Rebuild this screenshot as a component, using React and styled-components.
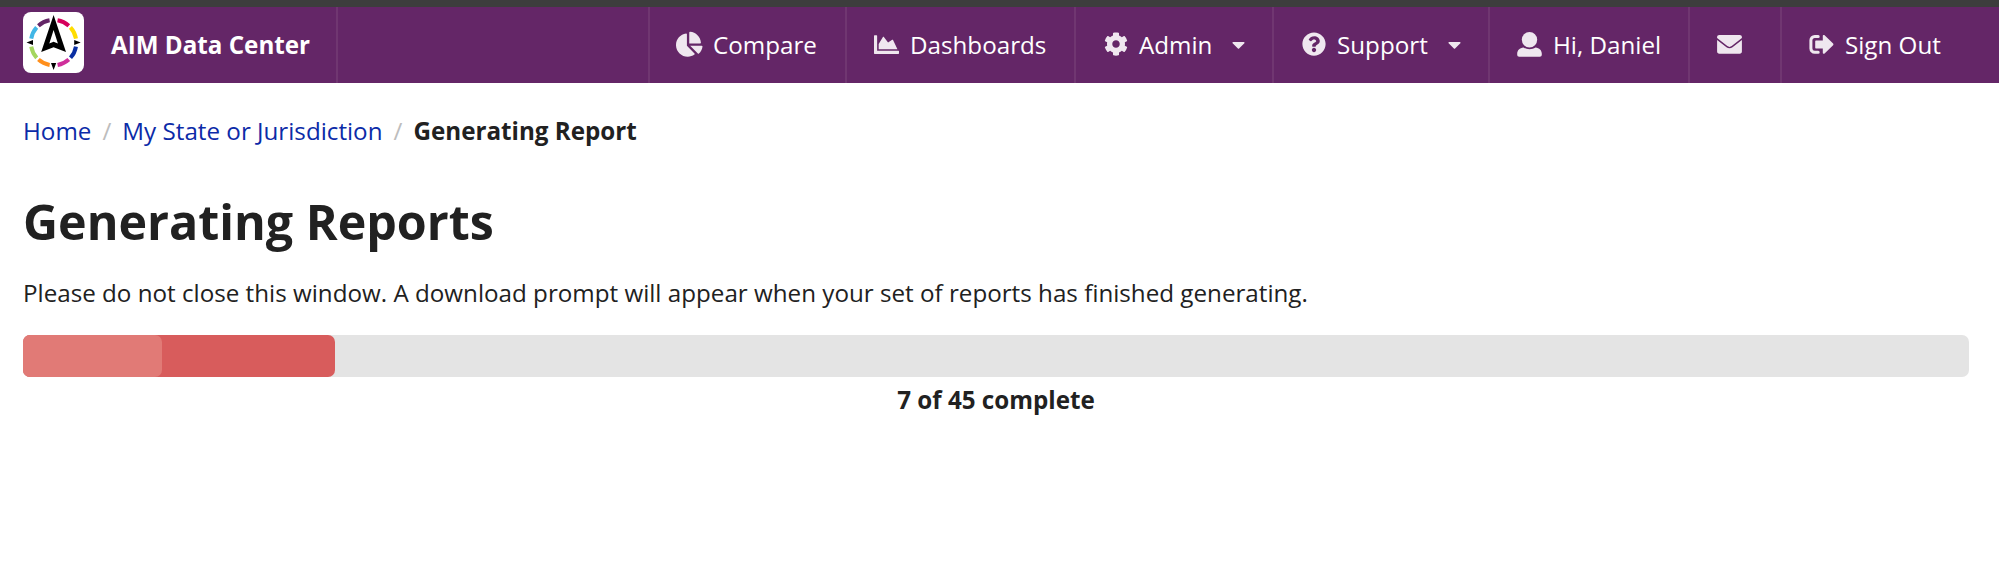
import React from "react";
import styled, { createGlobalStyle, ThemeProvider } from "styled-components";
import {
  FaChartPie,
  FaChartArea,
  FaCog,
  FaQuestionCircle,
  FaCaretDown,
} from "react-icons/fa";

const theme = {
  colors: {
    strip: "#3d3d3d",
    nav: "#642667",
    navDivider: "#703671",
    navIcon: "#efe7ef",
    link: "#0c2ba8",
    text: "#212121",
    slash: "#bdbdbd",
    track: "#e4e4e4",
    bar: "#d85c5c",
    pulse: "#e17a76",
  },
  font: '"Open Sans", "Noto Sans", sans-serif',
};

const GlobalStyle = createGlobalStyle`
  * { box-sizing: border-box; }
  body {
    margin: 0;
    background: #fff;
    color: ${({ theme }) => theme.colors.text};
    font-family: ${({ theme }) => theme.font};
    font-size: 24.2px;
    line-height: 34px;
  }
`;

// ── Navigation ───────────────────────────────────────────────────────────────

const NavBar = styled.nav`
  display: flex;
  height: 83px;
  border-top: 7px solid ${({ theme }) => theme.colors.strip};
  background: ${({ theme }) => theme.colors.nav};
  color: #fff;
`;

const Brand = styled.a`
  display: flex;
  align-items: center;
  gap: 27px;
  width: 338px;
  padding: 0 0 5px 23px;
  border-right: 2px solid ${({ theme }) => theme.colors.navDivider};
  font-weight: 700;
  white-space: nowrap;

  span { padding-top: 4px; }
`;

const NavMenu = styled.div`
  display: flex;
  margin-left: auto;
`;

const NavItem = styled.a`
  display: flex;
  align-items: center;
  width: ${({ $width }) => $width}px;
  padding: 0 0 1px 26px;
  border-left: 2px solid ${({ theme }) => theme.colors.navDivider};
  white-space: nowrap;

  svg { flex: none; color: ${({ theme }) => theme.colors.navIcon}; }
`;

const IconSlot = styled.span`
  display: flex;
  justify-content: center;
  width: 27px;
  margin: 0 ${({ $gap }) => $gap}px 1px 0;
`;

const Caret = styled(FaCaretDown)`
  margin-left: 16px;
`;

// ── Page ─────────────────────────────────────────────────────────────────────

const Page = styled.main`
  padding: 31px 30px 0 23px;
`;

const Breadcrumb = styled.div`
  display: flex;
  align-items: center;
  height: 34px;
  white-space: nowrap;

  a { color: ${({ theme }) => theme.colors.link}; }
  i {
    width: 31px;
    color: ${({ theme }) => theme.colors.slash};
    font-style: normal;
    text-align: center;
  }
`;

const Title = styled.h1`
  margin: 42px 0 0;
  font-size: 48.4px;
  line-height: 62px;
  font-weight: 700;
`;

const Message = styled.p`
  margin: 24px 0 0;
`;

const Progress = styled.div`
  height: 42px;
  margin-top: 25px;
  border-radius: 7px;
  background: ${({ theme }) => theme.colors.track};
`;

const Bar = styled.div`
  width: 312px;
  height: 100%;
  border-radius: 7px;
  background: ${({ theme }) => theme.colors.bar};
`;

const Pulse = styled.div`
  width: 139px;
  height: 100%;
  border-radius: 7px;
  background: ${({ theme }) => theme.colors.pulse};
`;

const ProgressLabel = styled.div`
  margin-top: 6px;
  font-weight: 700;
  text-align: center;
`;

// ── Icons ────────────────────────────────────────────────────────────────────

const UserIcon = ({ size }) => (
  <svg width={size} height={size} viewBox="0 0 25 25" fill="currentColor">
    <circle cx="12.5" cy="7.7" r="7.7" />
    <path d="M6.5 15.5C8.3 16.6 10.3 17.2 12.5 17.2s4.2-.6 6-1.7c3.8.3 6.3 2.9 6.3 6.2v1.1c0 1.2-.8 2-2 2H2.2c-1.2 0-2-.8-2-2v-1.1c0-3.3 2.5-5.9 6.3-6.2z" />
  </svg>
);

const MailIcon = ({ size }) => (
  <svg width={size} height={size} viewBox="0 0 25 25" fill="currentColor">
    <path d="M2.3 3h20.4c1.3 0 2.2.9 2.2 2v1.1l-10.2 8c-1.4 1.1-3 1.1-4.4 0L.1 6.1V5c0-1.1.9-2 2.2-2z" />
    <path d="M.1 8l9.4 7.3c1.9 1.4 4.1 1.4 6 0L24.9 8v11.6c0 1.3-.9 2.1-2.2 2.1H2.3C1 21.7.1 20.9.1 19.6z" />
  </svg>
);

const SignOutIcon = ({ size }) => (
  <svg width={size} height={size} viewBox="0 0 25 25">
    <path
      d="M9.2 4.5H5.7a3.8 3.8 0 0 0-3.8 3.8v8.2a3.8 3.8 0 0 0 3.8 3.8h3.5"
      fill="none"
      stroke="currentColor"
      strokeWidth="3"
      strokeLinecap="round"
    />
    <path
      d="M7.2 8.4h6.6V4c0-1 1.1-1.4 1.8-.7l8.5 8.3c.5.5.5 1.1 0 1.6l-8.5 8.3c-.7.7-1.8.3-1.8-.7v-4.4H7.2c-.6 0-1-.4-1-1v-6c0-.6.4-1 1-1z"
      fill="currentColor"
    />
  </svg>
);

const RING = [
  ["#d6005a", 10],
  ["#ffdd00", 48],
  ["#0a2fa3", 100],
  ["#cf2f9b", 138],
  ["#ff8f1c", 190],
  ["#a4d65e", 228],
  ["#41b6e6", 280],
  ["#642667", 318],
];

// Compass badge: eight arcs with a north arrow
const Logo = () => (
  <svg width="61" height="61" viewBox="0 0 61 61">
    <rect width="61" height="61" rx="8" fill="#fff" />
    {RING.map(([color, angle]) => (
      <path
        key={color}
        d="M30.6 7.9A22.7 22.7 0 0 1 42.6 11.3"
        fill="none"
        stroke={color}
        strokeWidth="4"
        transform={`rotate(${angle} 30.6 30.6)`}
      />
    ))}
    <path d="M3.5 30.6l6.5-2.5v5zM57.7 30.6l-6.5-2.5v5zM30.6 58l-2.6-7h5.2z" />
    <path
      fillRule="evenodd"
      d="M30.6 3L43 40 30.6 35.3 18.2 40zM30.6 18l-4.3 13.6 4.3-1.8 4.3 1.8z"
    />
  </svg>
);

const NAV_ITEMS = [
  { icon: FaChartPie, label: "Compare", width: 197, size: 26.5, gap: 10 },
  { icon: FaChartArea, label: "Dashboards", width: 229, size: 25, gap: 10 },
  { icon: FaCog, label: "Admin", width: 198, size: 24, gap: 10, caret: true },
  { icon: FaQuestionCircle, label: "Support", width: 216, size: 24, gap: 10, caret: true },
  { icon: UserIcon, label: "Hi, Daniel", width: 200, size: 25, gap: 10 },
  { icon: MailIcon, width: 92, size: 25, gap: 0 },
  { icon: SignOutIcon, label: "Sign Out", width: 219, size: 25, gap: 10 },
];

const App = () => (
  <ThemeProvider theme={theme}>
    <GlobalStyle />
    <NavBar>
      <Brand>
        <Logo />
        <span>AIM Data Center</span>
      </Brand>
      <NavMenu>
        {NAV_ITEMS.map(({ icon: Icon, label, width, size, gap, caret }) => (
          <NavItem key={width} $width={width}>
            <IconSlot $gap={gap}>
              <Icon size={size} />
            </IconSlot>
            {label}
            {caret && <Caret size={21} />}
          </NavItem>
        ))}
      </NavMenu>
    </NavBar>

    <Page>
      <Breadcrumb>
        <a>Home</a>
        <i>/</i>
        <a>My State or Jurisdiction</a>
        <i>/</i>
        <strong>Generating Report</strong>
      </Breadcrumb>
      <Title>Generating Reports</Title>
      <Message>
        Please do not close this window. A download prompt will appear when your
        set of reports has finished generating.
      </Message>
      <Progress>
        <Bar>
          <Pulse />
        </Bar>
      </Progress>
      <ProgressLabel>7 of 45 complete</ProgressLabel>
    </Page>
  </ThemeProvider>
);

export default App;
